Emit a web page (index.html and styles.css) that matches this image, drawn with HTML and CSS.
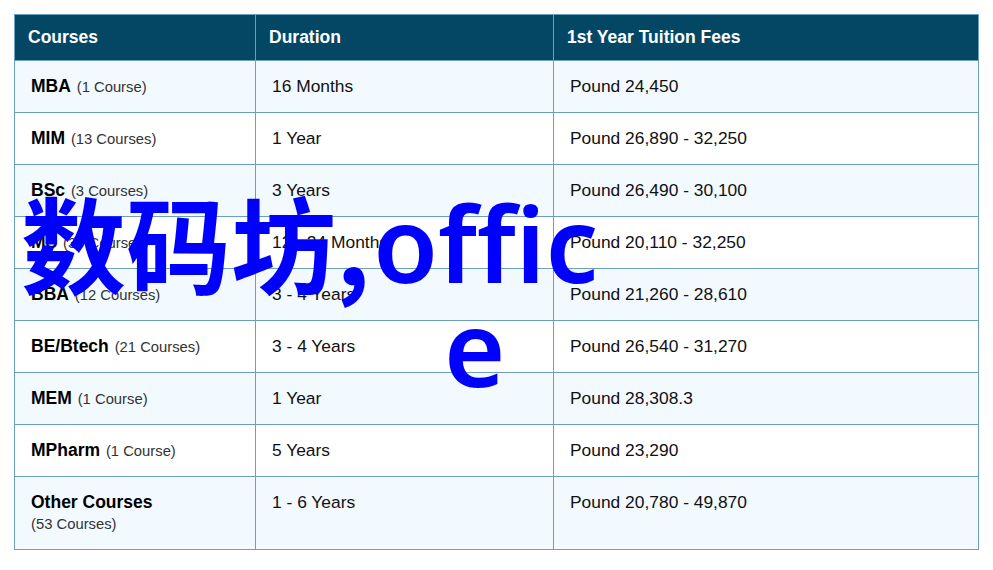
FILE: index.html
```html
<!DOCTYPE html>
<html lang="en">
<head>
<meta charset="utf-8">
<title>Courses</title>
<link rel="stylesheet" href="styles.css">
</head>
<body>
<table class="fees">
<colgroup><col class="c1"><col class="c2"><col class="c3"></colgroup>
<thead><tr><th>Courses</th><th>Duration</th><th>1st Year Tuition Fees</th></tr></thead>
<tbody>
<tr><td><b>MBA</b> <small>(1 Course)</small></td><td>16 Months</td><td>Pound 24,450</td></tr>
<tr><td><b>MIM</b> <small>(13 Courses)</small></td><td>1 Year</td><td>Pound 26,890 - 32,250</td></tr>
<tr><td><b>BSc</b> <small>(3 Courses)</small></td><td>3 Years</td><td>Pound 26,490 - 30,100</td></tr>
<tr><td><b>MS</b> <small>(30 Courses)</small></td><td>12 - 24 Months</td><td>Pound 20,110 - 32,250</td></tr>
<tr><td><b>BBA</b> <small>(12 Courses)</small></td><td>3 - 4 Years</td><td>Pound 21,260 - 28,610</td></tr>
<tr><td><b>BE/Btech</b> <small>(21 Courses)</small></td><td>3 - 4 Years</td><td>Pound 26,540 - 31,270</td></tr>
<tr><td><b>MEM</b> <small>(1 Course)</small></td><td>1 Year</td><td>Pound 28,308.3</td></tr>
<tr><td><b>MPharm</b> <small>(1 Course)</small></td><td>5 Years</td><td>Pound 23,290</td></tr>
<tr class="last"><td><b>Other Courses</b><div class="sub"><small>(53 Courses)</small></div></td><td>1 - 6 Years</td><td>Pound 20,780 - 49,870</td></tr>
</tbody>
</table>
<div class="overlay"><div class="line"><span class="cjk">数码坊,</span>offic</div><div class="wrap">e</div></div>
</body>
</html>
```
FILE: styles.css
```css
html, body { margin: 0; padding: 0; background: #fff; }
body { padding: 14px; font-family: "Liberation Sans", Arial, sans-serif; position: relative; }
.fees { border-collapse: collapse; table-layout: fixed; width: 965px; color: #111; font-size: 17.4px; }
.c1 { width: 241px; }
.c2 { width: 298px; }
.fees th, .fees td { border: 1px solid #6b9fbc; text-align: left; }
.fees th { background: #044765; color: #fff; height: 45px; padding: 0 0 0 13px; font-size: 17.5px; font-weight: bold; }
.fees td { height: 52px; padding: 14px 0 0 16px; vertical-align: top; box-sizing: border-box; line-height: 22px; }
.fees tbody tr:nth-child(odd) { background: #f2f9ff; }
.fees b { color: #000; font-size: 17.5px; margin-right: 1px; }
.fees small { font-size: 14.8px; color: #333; }
.fees .last td { height: 73px; }
.sub { line-height: 20px; }
.overlay { position: absolute; left: 21px; top: 188px; color: #0000ff; font-family: "Noto Sans", sans-serif; font-weight: 600; font-size: 105px; line-height: 105px; white-space: nowrap; }
.line { height: 105px; }
.cjk { font-family: "Noto Sans CJK SC", sans-serif; font-weight: bold; vertical-align: -3px; margin-right: 3px; }
.wrap { margin-left: 423px; margin-top: 1px; }
```
